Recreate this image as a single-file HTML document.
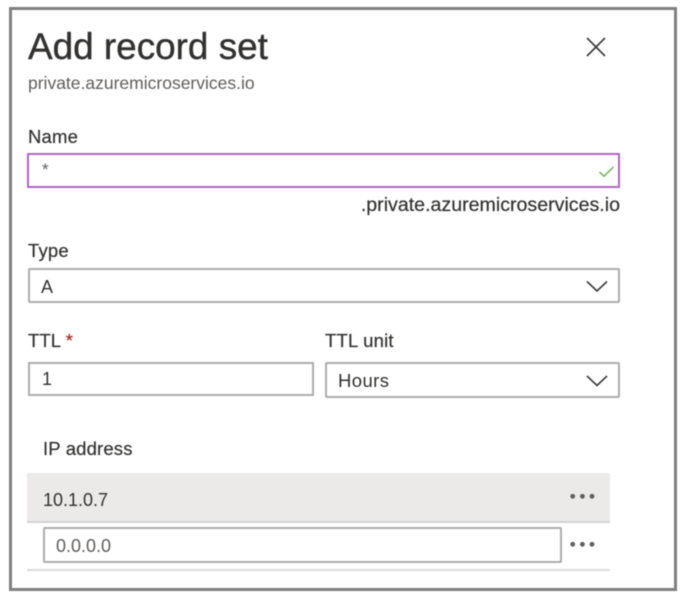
<!DOCTYPE html>
<html>
<head>
<meta charset="utf-8">
<style>
html,body{margin:0;padding:0;background:#fff;}
#p{position:relative;width:689px;height:608px;overflow:hidden;background:#fff;font-family:"Liberation Sans",sans-serif;color:#323130;filter:blur(.4px);}
#p div{position:absolute;box-sizing:border-box;white-space:nowrap;}
.t{line-height:20px;height:20px;font-size:18.5px;-webkit-text-stroke:.2px currentColor;}
.b{border:2px solid #adadad;border-radius:2px;background:#fff;}
svg{position:absolute;left:0;top:0;}
</style>
</head>
<body>
<div id="p">
<div style="left:9px;top:7px;width:668px;height:584px;border:3px solid #7f7f7f;"></div>

<div style="left:28px;top:26px;height:42px;line-height:42px;font-size:36.9px;color:#323130;-webkit-text-stroke:.4px #323130;">Add record set</div>
<div class="t" style="left:28px;top:73px;font-size:17.5px;color:#605e5c;-webkit-text-stroke:0;">private.azuremicroservices.io</div>

<div class="t" style="left:28px;top:127px;letter-spacing:.2px;">Name</div>
<div style="left:27px;top:153px;width:593px;height:35px;border:2px solid #ae68be;background:#fff;"></div>
<div class="t" style="left:42px;top:160px;font-size:17px;color:#605e5c;-webkit-text-stroke:0;">*</div>
<div class="t" style="right:69px;top:195px;font-size:19.6px;">.private.azuremicroservices.io</div>

<div class="t" style="left:28px;top:241px;letter-spacing:.2px;">Type</div>
<div class="b" style="left:28px;top:268px;width:592px;height:35px;"></div>
<div class="t" style="left:41px;top:277px;font-size:18px;-webkit-text-stroke:0;">A</div>

<div class="t" style="left:28px;top:331px;letter-spacing:.1px;">TTL <span style="color:#a4262c;">*</span></div>
<div class="b" style="left:28px;top:362px;width:286px;height:34px;border-radius:0;"></div>
<div class="t" style="left:42px;top:369px;font-size:18px;-webkit-text-stroke:0;">1</div>

<div class="t" style="left:325px;top:331px;letter-spacing:.2px;">TTL unit</div>
<div class="b" style="left:325px;top:362px;width:295px;height:36px;"></div>
<div class="t" style="left:338px;top:371px;font-size:18.5px;letter-spacing:.4px;-webkit-text-stroke:0;">Hours</div>

<div class="t" style="left:43px;top:439px;letter-spacing:.15px;">IP address</div>
<div style="left:27px;top:473px;width:583px;height:50px;background:#ebeae9;border-bottom:2px solid #d4d3d2;"></div>
<div class="t" style="left:43px;top:490px;font-size:18px;-webkit-text-stroke:0;">10.1.0.7</div>
<div class="b" style="left:43px;top:527px;width:519px;height:36px;"></div>
<div class="t" style="left:56px;top:536px;font-size:18px;color:#605e5c;-webkit-text-stroke:0;">0.0.0.0</div>
<div style="left:27px;top:569px;width:583px;height:2px;background:#dcdbda;"></div>

<svg width="689" height="608" viewBox="0 0 689 608" fill="none">
<path d="M587 38L605 56M605 38L587 56" stroke="#3a3938" stroke-width="1.6"/>
<path d="M599.5 172L604 176.2L613.5 167" stroke="#7cba6a" stroke-width="1.7"/>
<path d="M587 281.5L597 291L607 281.5" stroke="#3a3938" stroke-width="1.6"/>
<path d="M587 376L597 385.5L607 376" stroke="#3a3938" stroke-width="1.6"/>
<g fill="#605e5c">
<circle cx="572.7" cy="496.3" r="2.4"/><circle cx="582.4" cy="496.3" r="2.4"/><circle cx="592" cy="496.3" r="2.4"/>
<circle cx="572.7" cy="544.3" r="2.4"/><circle cx="582.4" cy="544.3" r="2.4"/><circle cx="592" cy="544.3" r="2.4"/>
</g>
</svg>
</div>
</body>
</html>
